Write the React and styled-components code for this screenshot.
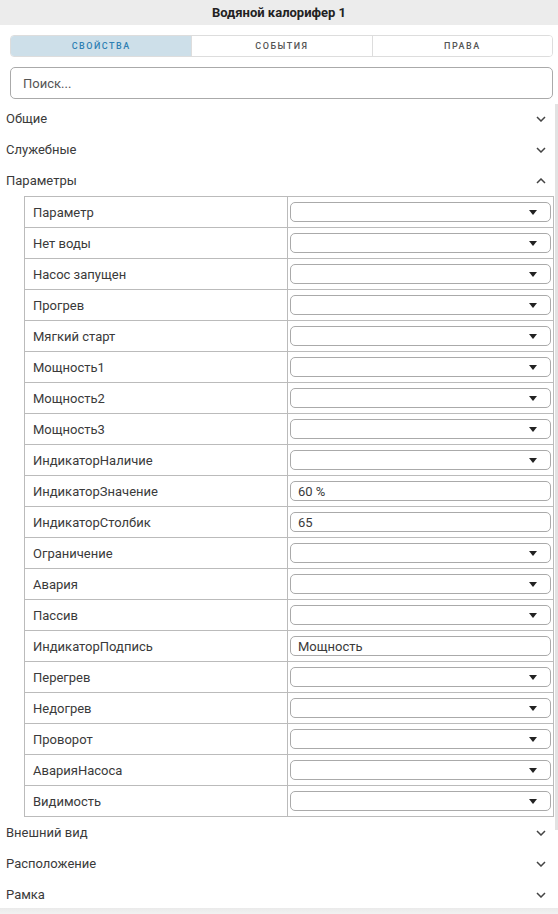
import React, { useState } from 'react'
import styled, { createGlobalStyle } from 'styled-components'

const GlobalStyle = createGlobalStyle`
  html, body {
    margin: 0;
    padding: 0;
    background: #fff;
  }
  body {
    font-family: Roboto, "Noto Sans", sans-serif;
    color: #3a3a3a;
  }
`

const tabs = ['Свойства', 'События', 'Права']

const topSections = ['Общие', 'Служебные']
const bottomSections = ['Внешний вид', 'Расположение', 'Рамка']

const params = [
  { name: 'Параметр' },
  { name: 'Нет воды' },
  { name: 'Насос запущен' },
  { name: 'Прогрев' },
  { name: 'Мягкий старт' },
  { name: 'Мощность1' },
  { name: 'Мощность2' },
  { name: 'Мощность3' },
  { name: 'ИндикаторНаличие' },
  { name: 'ИндикаторЗначение', text: '60 %' },
  { name: 'ИндикаторСтолбик', text: '65' },
  { name: 'Ограничение' },
  { name: 'Авария' },
  { name: 'Пассив' },
  { name: 'ИндикаторПодпись', text: 'Мощность' },
  { name: 'Перегрев' },
  { name: 'Недогрев' },
  { name: 'Проворот' },
  { name: 'АварияНасоса' },
  { name: 'Видимость' },
]

const Chevron = ({ up }) => (
  <svg width="10" height="6" viewBox="0 0 10 6">
    <path
      d={up ? 'M1 5 L5 1 L9 5' : 'M1 1 L5 5 L9 1'}
      fill="none"
      stroke="#444"
      strokeWidth="1.5"
    />
  </svg>
)

const Caret = () => (
  <svg width="8" height="5" viewBox="0 0 8 5">
    <path d="M0 0 H8 L4 5 Z" fill="#222" />
  </svg>
)

const Section = ({ title, open, onToggle }) => (
  <SectionRow onClick={onToggle}>
    <span>{title}</span>
    <ChevronBox>
      <Chevron up={open} />
    </ChevronBox>
  </SectionRow>
)

const App = () => {
  const [activeTab, setActiveTab] = useState(0)
  const [paramsOpen, setParamsOpen] = useState(true)

  return (
    <>
      <GlobalStyle />
      <Panel>
        <Header>Водяной калорифер 1</Header>
        <TabBar>
          {tabs.map((t, i) => (
            <Tab key={t} $active={i === activeTab} onClick={() => setActiveTab(i)}>
              {t}
            </Tab>
          ))}
        </TabBar>
        <Search placeholder="Поиск..." />
        <List>
          {topSections.map(s => (
            <Section key={s} title={s} />
          ))}
          <Section
            title="Параметры"
            open={paramsOpen}
            onToggle={() => setParamsOpen(!paramsOpen)}
          />
          {paramsOpen && (
            <Table>
              {params.map(p => (
                <Row key={p.name}>
                  <Label>{p.name}</Label>
                  <Value>
                    {p.text !== undefined ? (
                      <TextField>{p.text}</TextField>
                    ) : (
                      <Select>
                        <Caret />
                      </Select>
                    )}
                  </Value>
                </Row>
              ))}
            </Table>
          )}
          {bottomSections.map(s => (
            <Section key={s} title={s} />
          ))}
          <ScrollThumb />
        </List>
        <Footer />
      </Panel>
    </>
  )
}

const Panel = styled.div`
  width: 558px;
  height: 914px;
  display: flex;
  flex-direction: column;
  overflow: hidden;
  background: #fff;
`

const Header = styled.div`
  height: 25px;
  flex-shrink: 0;
  display: flex;
  align-items: center;
  justify-content: center;
  background: #ececec;
  font-size: 13px;
  font-weight: 700;
  color: #222;
`

const TabBar = styled.div`
  margin: 10px 5px 0 10px;
  height: 22px;
  box-sizing: border-box;
  flex-shrink: 0;
  display: grid;
  grid-template-columns: repeat(3, 1fr);
  border: 1px solid #ddd;
  border-radius: 4px;
  overflow: hidden;
`

const Tab = styled.div`
  display: flex;
  align-items: center;
  justify-content: center;
  font-size: 9px;
  font-weight: 500;
  text-transform: uppercase;
  letter-spacing: 1.5px;
  cursor: pointer;
  background: ${p => (p.$active ? '#cddfe9' : '#fff')};
  color: ${p => (p.$active ? '#2f7fb3' : '#555')};

  & + & {
    border-left: 1px solid #ddd;
  }
`

const Search = styled.input`
  margin: 10px 5px 0 10px;
  height: 32px;
  flex-shrink: 0;
  box-sizing: border-box;
  border: 1px solid #aaa;
  border-radius: 5px;
  padding: 0 12px;
  font-family: inherit;
  font-size: 13px;
  color: #3a3a3a;
  outline: none;

  &::placeholder {
    color: #555;
  }
`

const List = styled.div`
  position: relative;
  flex: 1;
  margin-top: 4px;
  overflow: hidden;
`

const SectionRow = styled.div`
  height: 31px;
  display: flex;
  align-items: center;
  justify-content: space-between;
  padding: 0 12px 0 6px;
  font-size: 13px;
  cursor: pointer;
`

const ChevronBox = styled.span`
  display: flex;
  align-items: center;
`

const Table = styled.div`
  margin: 0 4px 0 24px;
  border: 1px solid #bbb;
  border-bottom: none;
`

const Row = styled.div`
  height: 30px;
  display: grid;
  grid-template-columns: 263px 1fr;
  border-bottom: 1px solid #bbb;
`

const Label = styled.div`
  display: flex;
  align-items: center;
  padding-left: 8px;
  font-size: 13px;
  border-right: 1px solid #bbb;
`

const Value = styled.div`
  display: flex;
  align-items: center;
  padding: 0 2px 0 2px;
`

const Field = styled.div`
  flex: 1;
  height: 20px;
  box-sizing: border-box;
  border: 1px solid #aaa;
  border-radius: 5px;
  display: flex;
  align-items: center;
`

const Select = styled(Field)`
  justify-content: flex-end;
  padding-right: 13px;
`

const TextField = styled(Field)`
  padding-left: 7px;
  font-size: 13px;
`

const ScrollThumb = styled.div`
  position: absolute;
  top: 1px;
  right: 0;
  width: 3px;
  height: 726px;
  background: #e2e2e2;
`

const Footer = styled.div`
  height: 6px;
  flex-shrink: 0;
  background: linear-gradient(#eaeaea, #f2f2f2);
`

export default App
